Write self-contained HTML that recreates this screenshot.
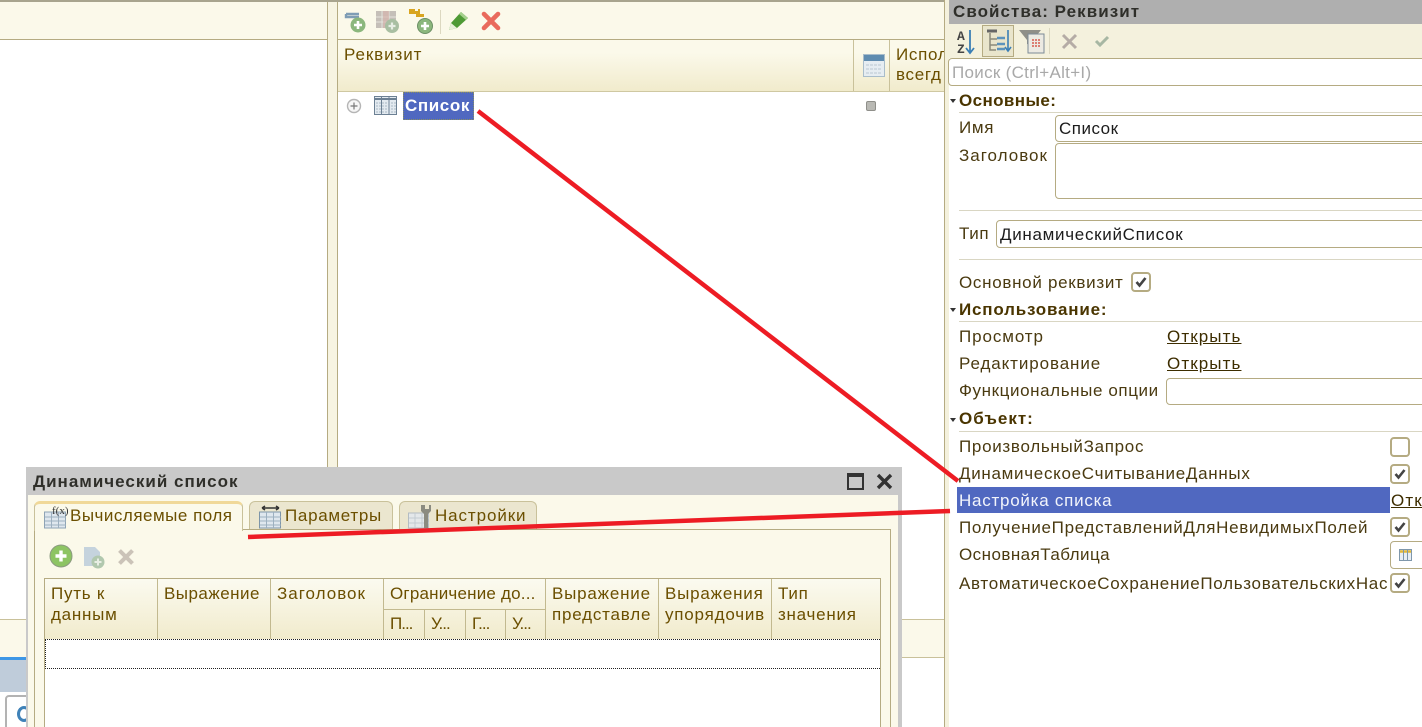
<!DOCTYPE html>
<html lang="ru"><head><meta charset="utf-8"><title>Динамический список</title>
<style>
html,body{margin:0;padding:0;width:1422px;height:727px;overflow:hidden}
body{position:relative;background:#fff;font-family:"Liberation Sans",sans-serif;font-size:17px;color:#4a3a10}
div,span,svg{position:absolute}
#r{left:0;top:0;width:1422px;height:727px;overflow:hidden;background:#fff}
.t{white-space:nowrap;line-height:18px;letter-spacing:.7px;margin-top:1px}
.b{font-weight:bold;color:#4a3500}
.l{left:959px}
.hl{background:#d9d6c3;height:1px;left:959px;width:463px}
.in{background:#fff;border:1px solid #b5ab82;border-radius:4px;box-sizing:border-box}
.cb{left:1390px;width:20px;height:20px;background:#fff;border:2px solid #b5ab82;border-radius:4px;box-sizing:border-box}
.cb svg{left:2px;top:2px}
.u{text-decoration:underline;color:#3d2d00;letter-spacing:1.1px}
.c{color:#6b4f00}
.tri{width:0;height:0;border-left:3.5px solid transparent;border-right:3.5px solid transparent;border-top:4px solid #333;left:950px}
</style></head><body><div id="r">

<!-- top left panes -->
<div style="left:0;top:0;width:945px;height:2px;background:#a8a48e"></div>
<div style="left:0;top:2px;width:327px;height:37px;background:#fbf9ea"></div>
<div style="left:0;top:39px;width:327px;height:1px;background:#b5ab82"></div>
<div style="left:327px;top:2px;width:11px;height:465px;background:#f7f4e2;border-left:1px solid #b5ab82;border-right:1px solid #b5ab82;box-sizing:border-box"></div>
<div style="left:338px;top:2px;width:606px;height:37px;background:#fbf9ea"></div>
<div style="left:338px;top:39px;width:606px;height:1px;background:#b5ab82"></div>
<div style="left:338px;top:40px;width:606px;height:51px;background:linear-gradient(#fbf9ea 25%,#f1ebcc)"></div>
<div style="left:338px;top:91px;width:606px;height:1px;background:#cfc8a2"></div>
<div style="left:853px;top:40px;width:1px;height:51px;background:#c9c19a"></div>
<div style="left:889px;top:40px;width:1px;height:51px;background:#c9c19a"></div>
<div class="t c" style="left:344px;top:45px;letter-spacing:.9px">Реквизит</div>
<div class="t c" style="left:896px;top:44px;width:48px;overflow:hidden;line-height:20px">Испол<br>всегд</div>

<!-- toolbar icons -->
<svg style="left:344px;top:9px" width="26" height="26" viewBox="0 0 26 26"><path d="M2 5h13M2 5v3h13" stroke="#7f9db5" stroke-width="2.4" fill="none"/><circle cx="14" cy="16" r="7.500" fill="#8bb77d"/><path d="M14 12v8M10 16h8" stroke="#fff" stroke-width="2.6"/></svg>
<svg style="left:375px;top:9px" width="26" height="26" viewBox="0 0 26 26"><rect x="1" y="2" width="20" height="17" fill="#c5bfb8"/><path d="M7 2v17M14 2v17M1 8h20M1 13h20" stroke="#e5e3dc"/><rect x="8" y="2" width="6" height="17" fill="#d5b5ae" opacity=".7"/><circle cx="17" cy="17" r="7" fill="#a9bfa2"/><path d="M17 13.500v7M13.500 17h7" stroke="#e8eee4" stroke-width="2.2"/></svg>
<svg style="left:407px;top:7px" width="28" height="28" viewBox="0 0 28 28"><path d="M2 2h6v2h3v-2h2v5h4v3H9V7H2z" fill="#d9a520"/><circle cx="18" cy="19" r="7.500" fill="#8bb77d" stroke="#6c8f66"/><path d="M18 15v8M14 19h8" stroke="#fff" stroke-width="2.6"/></svg>
<div style="left:440px;top:10px;width:1px;height:24px;background:#dcd8c0"></div>
<svg style="left:448px;top:10px" width="22" height="22" viewBox="0 0 22 22"><path d="M1 20l2-7L13 2l7 6L9 18z" fill="#4e9a35"/><path d="M13 2l7 6-2 2-7-6z" fill="#a4d08c"/><path d="M1 20l2-7 6 5z" fill="#e8f0da"/></svg>
<svg style="left:481px;top:11px" width="20" height="20" viewBox="0 0 20 20"><path d="M3 3l14 14M17 3L3 17" stroke="#e96a5c" stroke-width="4.600" stroke-linecap="round"/></svg>

<!-- row -->
<svg style="left:346px;top:98px" width="16" height="16" viewBox="0 0 16 16"><circle cx="8" cy="8" r="6.500" fill="#f6f6f6" stroke="#b5b5b5" stroke-width="1.400"/><path d="M8 4.500v7M4.500 8h7" stroke="#777" stroke-width="1.200"/></svg>
<svg style="left:374px;top:96px" width="24" height="20" viewBox="0 0 24 20"><rect x=".5" y=".5" width="22" height="18" fill="#e3eaf0" stroke="#6c8093"/><path d="M7.500 1v18M15 1v18" stroke="#6c8093"/><path d="M1 3h22" stroke="#6c8093" stroke-width="2"/><path d="M2 7h20M2 10h20M2 13h20M2 16h20" stroke="#a9b8c5" stroke-dasharray="2 1"/></svg>
<div style="left:403px;top:92px;width:71px;height:28px;background:#5068c0;outline:1px dotted #8a8f60;outline-offset:-1px"></div>
<div class="t" style="left:405px;top:96px;color:#fff;font-weight:bold;letter-spacing:.6px">Список</div>
<div style="left:866px;top:101px;width:10px;height:10px;background:#b9b9b4;border:1px solid #8f8f8a;border-radius:2px;box-sizing:border-box"></div>
<svg style="left:863px;top:54px" width="23" height="24" viewBox="0 0 23 24"><rect x=".5" y=".5" width="21" height="22" fill="#e6edf2" stroke="#a9bdcb"/><rect x="1" y="1" width="20" height="6" fill="#5f8cb0"/><path d="M3 11h16M3 15h16M3 19h16" stroke="#b9c8d2" stroke-dasharray="3 1"/></svg>

<!-- bottom left -->
<div style="left:0;top:619px;width:945px;height:1px;background:#c9c19a"></div>
<div style="left:0;top:620px;width:945px;height:37px;background:#fbf9ea"></div>
<div style="left:0;top:657px;width:945px;height:1px;background:#c9c19a"></div>
<div style="left:0;top:657px;width:26px;height:3px;background:#3e97e6"></div>
<div style="left:0;top:660px;width:26px;height:32px;background:#bfccda"></div>
<div style="left:5px;top:695px;width:30px;height:40px;border:2px solid #b3b3b3;border-radius:4px;background:#fff;box-sizing:border-box"></div>
<div style="left:17px;top:706px;width:14px;height:16px;border:3px solid #3f82b8;border-right-color:transparent;border-radius:50%;box-sizing:border-box"></div>

<!-- right panel -->
<div style="left:944px;top:0;width:1px;height:727px;background:#b5ab82"></div>
<div style="left:945px;top:0;width:477px;height:727px;background:#fff"></div>
<div style="left:945px;top:0;width:4px;height:727px;background:#f4f1dd"></div>
<div style="left:949px;top:0;width:473px;height:24px;background:#afafaf"></div>
<div class="t b" style="left:953px;top:2px;color:#2f2f2a;letter-spacing:1.05px">Свойства: Реквизит</div>
<div style="left:949px;top:24px;width:473px;height:34px;background:#f4f1dd"></div>
<div style="left:982px;top:25px;width:32px;height:32px;background:#e9e5cc;border:1px solid #b5ab82;box-sizing:border-box"></div>
<svg style="left:955px;top:29px" width="22" height="26" viewBox="0 0 22 26"><text x="2" y="11" font-family="Liberation Mono" font-size="13" font-weight="bold" fill="#444">A</text><text x="2" y="24" font-family="Liberation Mono" font-size="13" font-weight="bold" fill="#444">Z</text><path d="M15 1v23M11 19l4 5 4-5" stroke="#3b7fb5" stroke-width="1.800" fill="none"/></svg>
<svg style="left:985px;top:28px" width="28" height="26" viewBox="0 0 28 26"><path d="M2 3h10" stroke="#666" stroke-width="3"/><path d="M5 5v17h6M5 11h7M5 17h7" stroke="#8a8a7a" stroke-width="1.500" fill="none"/><path d="M12 10h8M12 16h8M12 21h8" stroke="#5c93bc" stroke-width="2.400"/><path d="M23 2v21M20 19l3 4 3-4" stroke="#3b7fb5" stroke-width="1.600" fill="none"/></svg>
<svg style="left:1018px;top:28px" width="28" height="26" viewBox="0 0 28 26"><path d="M1 2h22l-8 10v6l-6-2v-4z" fill="#8f8f88"/><rect x="10" y="6" width="16" height="19" fill="#eceae2" stroke="#7d8b96"/><path d="M14 12h8M14 15h8M14 18h8" stroke="#d65a4c" stroke-width="1.400" stroke-dasharray="2 1"/></svg>
<div style="left:1049px;top:28px;width:1px;height:26px;background:#dcd8c0"></div>
<svg style="left:1061px;top:33px" width="17" height="17" viewBox="0 0 17 17"><path d="M2 2l13 13M15 2L2 15" stroke="#b5aca6" stroke-width="3"/></svg>
<svg style="left:1094px;top:34px" width="16" height="14" viewBox="0 0 16 14"><path d="M2 7l4 4 8-8" stroke="#a7b7a3" stroke-width="3" fill="none"/></svg>
<div class="in" style="left:948px;top:58px;width:480px;height:28px"></div>
<div class="t" style="left:952px;top:63px;color:#a9a9a9;letter-spacing:.3px">Поиск (Ctrl+Alt+I)</div>

<div class="tri" style="top:99px"></div><div class="t b" style="left:959px;top:91px;letter-spacing:.4px">Основные:</div>
<div class="hl" style="top:112px"></div>
<div class="t l" style="top:118px">Имя</div>
<div class="in" style="left:1055px;top:115px;width:380px;height:27px"></div>
<div class="t" style="left:1059px;top:119px;color:#1c1c1c;letter-spacing:.5px">Список</div>
<div class="t l" style="top:146px;letter-spacing:1px">Заголовок</div>
<div class="in" style="left:1055px;top:143px;width:380px;height:56px"></div>
<div class="hl" style="top:210px"></div>
<div class="t l" style="top:224px;letter-spacing:.6px">Тип</div>
<div class="in" style="left:996px;top:220px;width:440px;height:28px"></div>
<div class="t" style="left:1000px;top:225px;color:#1c1c1c">ДинамическийСписок</div>
<div class="hl" style="top:259px"></div>
<div class="t l" style="top:273px">Основной реквизит</div>
<div class="cb" style="left:1131px;top:272px"><svg width="12" height="12" viewBox="0 0 12 12"><path d="M1.500 6l3 3.500L10.500 2" stroke="#444" stroke-width="2.600" fill="none"/></svg></div>
<div class="tri" style="top:308px"></div><div class="t b" style="left:959px;top:300px;letter-spacing:.8px">Использование:</div>
<div class="hl" style="top:321px"></div>
<div class="t l" style="top:327px;letter-spacing:.9px">Просмотр</div><div class="t u" style="left:1167px;top:327px">Открыть</div>
<div class="t l" style="top:354px;letter-spacing:.9px">Редактирование</div><div class="t u" style="left:1167px;top:354px">Открыть</div>
<div class="t l" style="top:381px;letter-spacing:.6px">Функциональные опции</div>
<div class="in" style="left:1166px;top:378px;width:270px;height:27px"></div>
<div class="tri" style="top:418px"></div><div class="t b" style="left:959px;top:409px;letter-spacing:1px">Объект:</div>
<div class="hl" style="top:431px"></div>
<div class="t l" style="top:437px">ПроизвольныйЗапрос</div>
<div class="cb" style="top:437px"></div>
<div class="t l" style="top:464px">ДинамическоеСчитываниеДанных</div>
<div class="cb" style="top:464px"><svg width="12" height="12" viewBox="0 0 12 12"><path d="M1.500 6l3 3.500L10.500 2" stroke="#444" stroke-width="2.600" fill="none"/></svg></div>
<div style="left:957px;top:487px;width:433px;height:26px;background:#5068c0"></div>
<div class="t" style="left:959px;top:491px;color:#f2f4fb;letter-spacing:.75px">Настройка списка</div>
<div class="t u" style="left:1391px;top:491px">Открыть</div>
<div class="t l" style="top:518px">ПолучениеПредставленийДляНевидимыхПолей</div>
<div class="cb" style="top:517px"><svg width="12" height="12" viewBox="0 0 12 12"><path d="M1.500 6l3 3.500L10.500 2" stroke="#444" stroke-width="2.600" fill="none"/></svg></div>
<div class="t l" style="top:545px;letter-spacing:.45px">ОсновнаяТаблица</div>
<div class="in" style="left:1390px;top:541px;width:50px;height:28px"></div>
<svg style="left:1399px;top:549px" width="14" height="13" viewBox="0 0 14 13"><rect x=".5" y=".5" width="12" height="11" fill="#e8eef4" stroke="#7f97ab"/><path d="M1 2.500h11" stroke="#e2b93a" stroke-width="2.500"/><path d="M4.500 1v11M8.500 1v11" stroke="#7f97ab"/></svg>
<div class="t l" style="top:574px;width:429px;overflow:hidden">АвтоматическоеСохранениеПользовательскихНастроек</div>
<div class="cb" style="top:573px"><svg width="12" height="12" viewBox="0 0 12 12"><path d="M1.500 6l3 3.500L10.500 2" stroke="#444" stroke-width="2.600" fill="none"/></svg></div>

<!-- dialog -->
<div style="left:26px;top:467px;width:876px;height:260px;background:#c9c9c9"></div>
<div style="left:28px;top:495px;width:870px;height:232px;background:#fbf9ea"></div>
<div class="t b" style="left:33px;top:472px;color:#2f2f2a;letter-spacing:1px">Динамический список</div>
<svg style="left:846px;top:472px" width="20" height="20" viewBox="0 0 20 20"><rect x="2" y="2" width="15" height="15" fill="none" stroke="#333" stroke-width="2"/><path d="M2 4h15" stroke="#333" stroke-width="2"/></svg>
<svg style="left:875px;top:472px" width="20" height="20" viewBox="0 0 20 20"><path d="M3 3l13 13M16 3L3 16" stroke="#333" stroke-width="3.400"/></svg>

<div style="left:34px;top:529px;width:857px;height:200px;border:1px solid #b5ab82;box-sizing:border-box"></div>
<div style="left:34px;top:501px;width:209px;height:30px;background:#fbf9ea;border:1px solid #c9c19a;border-top:3px solid #f0d898;border-bottom:none;border-radius:6px 6px 0 0;box-sizing:border-box"></div>
<div style="left:249px;top:501px;width:144px;height:28px;background:#ebe6cf;border:1px solid #c9c19a;border-bottom:none;border-radius:6px 6px 0 0;box-sizing:border-box"></div>
<div style="left:399px;top:501px;width:138px;height:28px;background:#ebe6cf;border:1px solid #c9c19a;border-bottom:none;border-radius:6px 6px 0 0;box-sizing:border-box"></div>
<div class="t c" style="left:70px;top:506px;letter-spacing:.5px">Вычисляемые поля</div>
<div class="t c" style="left:285px;top:506px">Параметры</div>
<div class="t c" style="left:435px;top:506px;letter-spacing:.9px">Настройки</div>
<svg style="left:44px;top:505px" width="24" height="24" viewBox="0 0 24 24"><rect x=".5" y="7" width="21" height="16" fill="#dfe7ee" stroke="#8ea3b5"/><path d="M7.500 7v16M14.500 7v16M1 12h21M1 16h21M1 20h21" stroke="#9db0c0"/><text x="8" y="9" font-size="11" font-family="Liberation Serif" fill="#333">f(x)</text></svg>
<svg style="left:259px;top:505px" width="24" height="24" viewBox="0 0 24 24"><rect x=".5" y="7" width="21" height="16" fill="#dfe7ee" stroke="#7d95a9"/><path d="M7.500 7v16M14.500 7v16M1 12h21M1 16h21M1 20h21" stroke="#9db0c0"/><path d="M3 3h17M3 3l3-2M3 3l3 2M20 3l-3-2M20 3l-3 2" stroke="#333" stroke-width="1.500"/></svg>
<svg style="left:408px;top:504px" width="25" height="25" viewBox="0 0 25 25"><rect x=".5" y="9" width="20" height="15" fill="#e4e8ea" stroke="#b3bcc3"/><path d="M7 9v15M14 9v15M1 14h20M1 19h20" stroke="#c3ccd2"/><path d="M13 1v6l3 3v14h4V10l3-3V1l-2 0v4h-4V1z" fill="#8b8b80"/></svg>

<svg style="left:49px;top:544px" width="25" height="25" viewBox="0 0 25 25"><circle cx="12" cy="12" r="11" fill="#8dc463" stroke="#8b9a80"/><path d="M12 6.500v11M6.500 12h11" stroke="#fff" stroke-width="3.400"/></svg>
<svg style="left:83px;top:546px" width="24" height="24" viewBox="0 0 24 24"><path d="M1 1h11l5 5v14H1z" fill="#c5d3dd"/><circle cx="15" cy="16" r="6.500" fill="#b1c8ae"/><path d="M15 12.500v7M11.500 16h7" stroke="#e8eee4" stroke-width="2"/></svg>
<svg style="left:117px;top:548px" width="18" height="18" viewBox="0 0 18 18"><path d="M2.500 2.500l13 13M15.500 2.500l-13 13" stroke="#cbc3b8" stroke-width="4"/></svg>

<!-- table -->
<div style="left:44px;top:578px;width:837px;height:160px;background:#fff;border:1px solid #b5ab82;border-bottom:none;box-sizing:border-box"></div>
<div style="left:45px;top:579px;width:835px;height:60px;background:linear-gradient(#fbfaf0,#f1ebcc)"></div>
<div style="left:157px;top:579px;width:1px;height:60px;background:#c2b98f"></div>
<div style="left:270px;top:579px;width:1px;height:60px;background:#c2b98f"></div>
<div style="left:383px;top:579px;width:1px;height:60px;background:#c2b98f"></div>
<div style="left:545px;top:579px;width:1px;height:60px;background:#c2b98f"></div>
<div style="left:658px;top:579px;width:1px;height:60px;background:#c2b98f"></div>
<div style="left:771px;top:579px;width:1px;height:60px;background:#c2b98f"></div>
<div style="left:383px;top:609px;width:162px;height:1px;background:#c2b98f"></div>
<div style="left:424px;top:609px;width:1px;height:30px;background:#c2b98f"></div>
<div style="left:465px;top:609px;width:1px;height:30px;background:#c2b98f"></div>
<div style="left:505px;top:609px;width:1px;height:30px;background:#c2b98f"></div>
<div class="t c" style="left:51px;top:582px;line-height:21px;letter-spacing:.75px">Путь к<br>данным</div>
<div class="t c" style="left:164px;top:583px;line-height:20px;letter-spacing:.47px">Выражение</div>
<div class="t c" style="left:277px;top:583px;line-height:20px;letter-spacing:1px">Заголовок</div>
<div class="t c" style="left:390px;top:583px;line-height:20px;letter-spacing:.2px">Ограничение до...</div>
<div class="t c" style="left:390px;top:614px;letter-spacing:-1px">П...</div>
<div class="t c" style="left:431px;top:614px;letter-spacing:-1px">У...</div>
<div class="t c" style="left:472px;top:614px;letter-spacing:-1px">Г...</div>
<div class="t c" style="left:512px;top:614px;letter-spacing:-1px">У...</div>
<div class="t c" style="left:552px;top:582px;line-height:21px;letter-spacing:.8px">Выражение<br>представле</div>
<div class="t c" style="left:665px;top:582px;line-height:21px;letter-spacing:.8px">Выражения<br>упорядочив</div>
<div class="t c" style="left:778px;top:582px;line-height:21px;letter-spacing:.75px">Тип<br>значения</div>
<div style="left:45px;top:639px;width:835px;height:30px;border:1px dotted #222;box-sizing:border-box;border-right:none"></div>

<!-- red annotation lines -->
<svg style="left:0;top:0" width="1422" height="727" viewBox="0 0 1422 727"><path d="M478 111L958 481" stroke="#ed1c24" stroke-width="4.500" fill="none"/><path d="M248 537L950 511" stroke="#ed1c24" stroke-width="4.500" fill="none"/></svg>
</div></body></html>
